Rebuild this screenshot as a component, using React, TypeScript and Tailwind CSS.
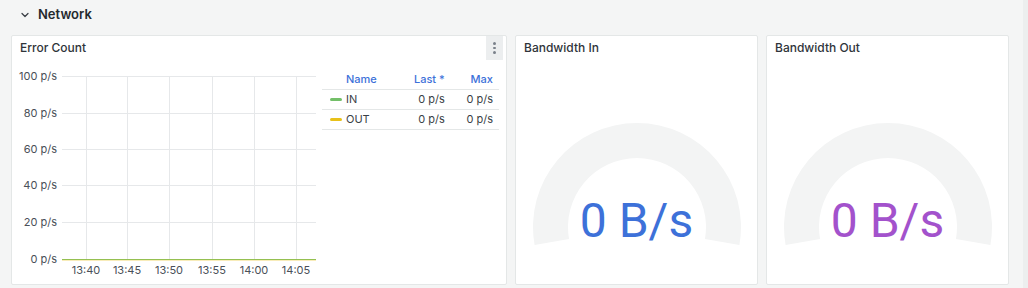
import { ChevronDown } from 'lucide-react'

const yTicks = [
  { label: '100 p/s', y: 16 },
  { label: '80 p/s', y: 53 },
  { label: '60 p/s', y: 89 },
  { label: '40 p/s', y: 125 },
  { label: '20 p/s', y: 162 },
  { label: '0 p/s', y: 199 },
]

const xTicks = [
  { label: '13:40', x: 74 },
  { label: '13:45', x: 115 },
  { label: '13:50', x: 157 },
  { label: '13:55', x: 200 },
  { label: '14:00', x: 242 },
  { label: '14:05', x: 284 },
]

const series = [
  { name: 'IN', color: '#73bf69', last: '0 p/s', max: '0 p/s' },
  { name: 'OUT', color: '#e8c11a', last: '0 p/s', max: '0 p/s' },
]

function PanelTitle({ title }: { title: string }) {
  return (
    <div className="h-6 flex items-center px-2 text-[12px] font-medium text-[#2f343a]">
      {title}
    </div>
  )
}

function Gauge({ title, color }: { title: string; color: string }) {
  // arc from 190deg to -10deg around (122,106)
  const cx = 122
  const cy = 106
  const ro = 104
  const ri = 69
  const a0 = (190 * Math.PI) / 180
  const a1 = (-10 * Math.PI) / 180
  const p = (r: number, a: number) => `${cx + r * Math.cos(a)} ${cy - r * Math.sin(a)}`
  const d = `M ${p(ro, a0)} A ${ro} ${ro} 0 1 1 ${p(ro, a1)} L ${p(ri, a1)} A ${ri} ${ri} 0 1 0 ${p(ri, a0)} Z`

  return (
    <div className="w-[243px] h-full bg-white border border-[#e4e7e7] rounded-[2px] flex flex-col">
      <PanelTitle title={title} />
      <div className="flex-1 flex flex-col items-center">
        <div className="relative mt-[61px] w-[244px] h-[140px]">
          <svg width="244" height="140" className="absolute inset-0">
            <path d={d} fill="#f3f4f4" />
          </svg>
          <div
            className="absolute left-0 right-0 top-[76px] text-center text-[48px] leading-none"
            style={{ color, fontFamily: 'Roboto, sans-serif' }}
          >
            0 B/s
          </div>
        </div>
      </div>
    </div>
  )
}

export default function App() {
  return (
    <div
      className="w-[1028px] h-[288px] bg-[#f4f5f5] flex"
      style={{ fontFamily: 'Inter, "Noto Sans", sans-serif' }}
    >
      <div className="flex-1 flex flex-col pl-[11px] pr-[14px]">
        {/* Row header */}
        <div className="h-[35px] flex items-center gap-[7px] pl-[8px] pb-[5px]">
          <ChevronDown className="w-3 h-3 text-[#3a3f46]" strokeWidth={2.5} />
          <span className="text-[13px] font-semibold text-[#24292e]">Network</span>
        </div>

        <div className="flex gap-2 h-[250px]">
          {/* Error Count */}
          <div className="w-[496px] h-full bg-white border border-[#e4e7e7] rounded-[2px] flex flex-col">
            <div className="h-6 flex items-center justify-between pl-2">
              <span className="text-[12px] font-medium text-[#2f343a]">Error Count</span>
              <div className="w-[17px] h-6 bg-[#eceeef] flex flex-col items-center justify-center gap-[2px] mr-[3px]">
                <span className="w-[2.5px] h-[2.5px] rounded-full bg-[#7a818a]" />
                <span className="w-[2.5px] h-[2.5px] rounded-full bg-[#7a818a]" />
                <span className="w-[2.5px] h-[2.5px] rounded-full bg-[#7a818a]" />
              </div>
            </div>
            <div className="flex-1 flex">
              <svg width="310" height="224" className="shrink-0">
                {yTicks.map((t) => (
                  <g key={t.label}>
                    <line x1="50" x2="304" y1={t.y + 0.5} y2={t.y + 0.5} stroke="#e6e8ea" />
                    <text
                      x="45"
                      y={t.y + 4}
                      textAnchor="end"
                      fontSize="11"
                      fill="#4a5058"
                      fontFamily="Inter, sans-serif"
                    >
                      {t.label}
                    </text>
                  </g>
                ))}
                {xTicks.map((t) => (
                  <g key={t.label}>
                    <line x1={t.x + 0.5} x2={t.x + 0.5} y1="16" y2="199" stroke="#e6e8ea" />
                    <text
                      x={t.x}
                      y="214"
                      textAnchor="middle"
                      fontSize="11"
                      fill="#4a5058"
                      fontFamily="Inter, sans-serif"
                    >
                      {t.label}
                    </text>
                  </g>
                ))}
                <line x1="50" x2="304" y1="199.5" y2="199.5" stroke="#73bf69" strokeWidth="1" />
                <line x1="50" x2="304" y1="200" y2="200" stroke="#e8c11a" strokeOpacity="0.6" strokeWidth="1" />
              </svg>
              <div className="flex-1 pr-[7px] pt-[9px]">
                <table className="w-full text-[11px] text-[#3a3f46] border-collapse">
                  <thead>
                    <tr className="h-5 border-b border-[#e4e7e7]">
                      <th className="w-[24px]" />
                      <th className="text-left font-medium text-[#3d71d9]">Name</th>
                      <th className="text-right font-medium text-[#3d71d9] pr-[3px]">Last *</th>
                      <th className="text-right font-medium text-[#3d71d9] pr-[6px]">Max</th>
                    </tr>
                  </thead>
                  <tbody>
                    {series.map((s) => (
                      <tr key={s.name} className="h-5 border-b border-[#e4e7e7]">
                        <td className="pl-[8px]">
                          <span className="block w-[12px] h-[3px] rounded-full" style={{ background: s.color }} />
                        </td>
                        <td className="text-left">{s.name}</td>
                        <td className="text-right pr-[3px]">{s.last}</td>
                        <td className="text-right pr-[6px]">{s.max}</td>
                      </tr>
                    ))}
                  </tbody>
                </table>
              </div>
            </div>
          </div>

          <Gauge title="Bandwidth In" color="#3d71d9" />
          <Gauge title="Bandwidth Out" color="#a352cc" />
        </div>
      </div>
      <div className="w-[6px] h-full bg-[#eceeee]" />
    </div>
  )
}
